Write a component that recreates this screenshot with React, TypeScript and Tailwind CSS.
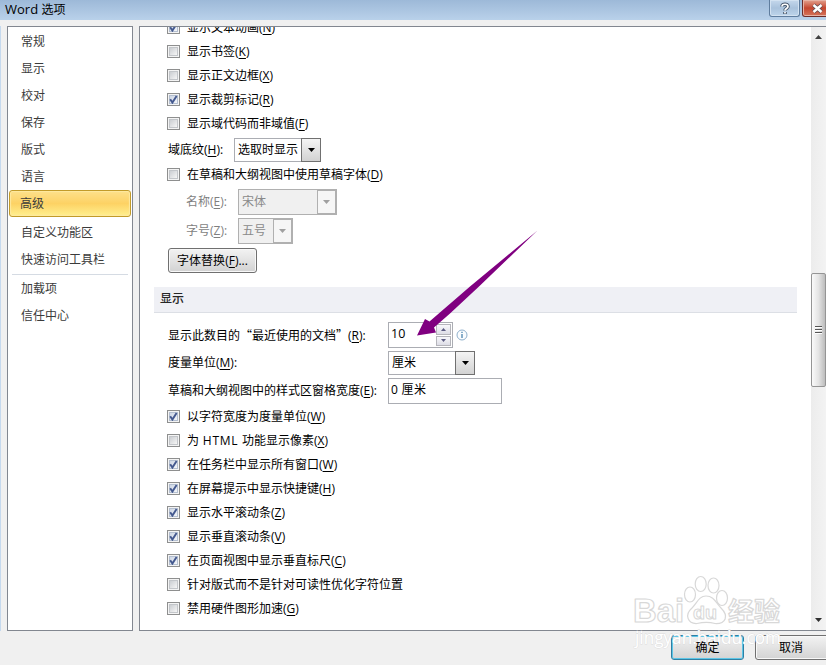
import React from "react";

const NAV_TOP = ["常规", "显示", "校对", "保存", "版式", "语言", "高级"];
const NAV_MIDDLE = ["自定义功能区", "快速访问工具栏"];
const NAV_BOTTOM = ["加载项", "信任中心"];

type Option = { label: React.ReactNode; hotkey?: string; checked?: boolean };

const CONTENT_OPTIONS: Option[] = [
  { label: "显示文本动画", hotkey: "N", checked: true },
  { label: "显示书签", hotkey: "K" },
  { label: "显示正文边框", hotkey: "X" },
  { label: "显示裁剪标记", hotkey: "R", checked: true },
  { label: "显示域代码而非域值", hotkey: "F" },
];

const DISPLAY_OPTIONS: Option[] = [
  { label: "以字符宽度为度量单位", hotkey: "W", checked: true },
  { label: <>为<span className="tracking-[0.7px]"> HTML </span>功能显示像素</>, hotkey: "X" },
  { label: "在任务栏中显示所有窗口", hotkey: "W", checked: true },
  { label: "在屏幕提示中显示快捷键", hotkey: "H", checked: true },
  { label: "显示水平滚动条", hotkey: "Z", checked: true },
  { label: "显示垂直滚动条", hotkey: "V", checked: true },
  { label: "在页面视图中显示垂直标尺", hotkey: "C", checked: true },
  { label: "针对版式而不是针对可读性优化字符位置" },
  { label: "禁用硬件图形加速", hotkey: "G" },
];

function Hotkey({ k, tail = "" }: { k: string; tail?: string }) {
  return (
    <span>
      (<span className="underline decoration-1 underline-offset-2">{k}</span>){tail}
    </span>
  );
}

function CheckRow({ label, hotkey, checked }: Option) {
  return (
    <div className="flex h-6 shrink-0 items-start">
      <div className="mt-[5px] flex size-[13px] items-center justify-center border border-[#8e8f8f] bg-[#f4f4f4]">
        <div
          className={
            checked
              ? "size-[9px] border border-[#b4bfd0] bg-linear-to-br from-[#cdd6e4] to-[#f4f6fa]"
              : "size-[9px] border border-[#c3c6ca] bg-linear-to-br from-[#cbced2] to-[#f6f6f6]"
          }
        >
          {checked && (
            <svg width="9" height="9" viewBox="0 0 9 9" className="-mt-px -ml-px">
              <path d="M1.2 4.2 L3.4 7.6 L7.6 0.9" fill="none" stroke="#44598f" strokeWidth="1.9" />
            </svg>
          )}
        </div>
      </div>
      <span className="ml-[7px] leading-6 whitespace-nowrap">
        {label}
        {hotkey && <Hotkey k={hotkey} />}
      </span>
    </div>
  );
}

function NavItem({ label, active }: { label: string; active?: boolean }) {
  if (active) {
    return (
      <div className="mx-px h-[27px] rounded-[3px] border border-[#c29b29] bg-linear-to-b from-[#fde08a] via-[#fdd264] to-[#fff08e] pl-[10px] leading-[25px] shadow-[inset_0_0_1px_1px_#fee9a0]">
        {label}
      </div>
    );
  }
  return <div className="h-[27px] pl-[13px] leading-[27px]">{label}</div>;
}

function Triangle({ className }: { className: string }) {
  return (
    <svg width="7" height="4" viewBox="0 0 7 4" className={className}>
      <path d="M0 0 H7 L3.5 4 Z" fill="currentColor" />
    </svg>
  );
}

function Combo({ value, className, disabled }: { value: string; className: string; disabled?: boolean }) {
  return (
    <div className={`flex border ${disabled ? "border-[#b0b0b0] bg-[#f0f0f0] text-[#8a8a8a]" : "border-[#abadb3] bg-white"} ${className}`}>
      <span className="flex-1 self-center pl-[3px] leading-5 whitespace-nowrap">{value}</span>
      <div
        className={
          disabled
            ? "flex w-[19px] items-center justify-center border border-[#b0b0b0] bg-[#f6f6f6] text-[#a0a0a0]"
            : "-my-px -mr-px flex w-5 items-center justify-center border border-[#707070] bg-linear-to-b from-[#f4f4f4] to-[#d2d2d2] text-black"
        }
      >
        <Triangle className="" />
      </div>
    </div>
  );
}

function Watermark() {
  return (
    <svg width="160" height="80" viewBox="0 0 160 80" className="absolute top-[570px] left-[628px]">
      <g fill="#fff" fillOpacity="0.8" stroke="#d8d8d8" strokeWidth="1.2" strokeLinejoin="round">
        <text x="5" y="52" fontFamily="Liberation Sans" fontWeight="bold" fontSize="34" textLength="51" lengthAdjust="spacingAndGlyphs">
          Bai
        </text>
        <ellipse cx="62" cy="24.500" rx="5.500" ry="7.500" />
        <ellipse cx="72.700" cy="14" rx="5.500" ry="7.500" />
        <ellipse cx="85.500" cy="15.500" rx="5.500" ry="7.500" />
        <ellipse cx="94" cy="28" rx="5.500" ry="7.500" />
        <path d="M78 26 C71 26 69 33 64 38 C56 45 60 54 69 53.500 C76 52 81 52 87 53.500 C98 54 101 46 93 38 C88 33 86 26 78 26 Z" />
        <text x="65" y="49" fontFamily="Liberation Sans" fontWeight="bold" fontSize="19" strokeWidth="1" textLength="24" lengthAdjust="spacingAndGlyphs">
          du
        </text>
        <text x="100" y="51" fontFamily="Noto Sans CJK SC" fontWeight="bold" fontSize="26" textLength="52">
          经验
        </text>
      </g>
      <text
        x="7"
        y="74"
        fontFamily="Open Sans"
        fontSize="18"
        fill="#fff"
        stroke="#dcdcdc"
        strokeWidth="0.8"
        paintOrder="stroke"
        textLength="146"
        lengthAdjust="spacingAndGlyphs"
      >
        jingyan.baidu.com
      </text>
    </svg>
  );
}

export default function App() {
  return (
    <div
      lang="zh-CN"
      className="relative flex h-[665px] w-[826px] flex-col overflow-hidden bg-[#f0f0f0] font-['Open_Sans','Noto_Sans_CJK_SC',sans-serif] text-[12px] text-black"
    >
      <header className="flex h-5 shrink-0 justify-between bg-linear-to-b from-[#9db9d8] to-[#b9d1ea] pl-[5px]">
        <span className="leading-[18px]">
          <span className="text-[13px]">Word </span>选项
        </span>
        <div className="flex h-[17px] gap-[2px]">
          <div className="flex w-[31px] items-center justify-center rounded-b-[3px] border border-t-0 border-[#5f7d9e] bg-linear-to-b from-[#c5d8ec] via-[#a9c2dc] to-[#bed5eb] shadow-[inset_0_0_0_1px_#d3e2f1]">
            <svg width="12" height="13" viewBox="0 0 12 13" fill="none">
              <path d="M3 4.500 C3 1.500 9 1.500 9 4.500 C9 6.500 6 6.500 6 8.500 M6 10 V12" stroke="#46566b" strokeWidth="3.600" />
              <path d="M3 4.500 C3 1.500 9 1.500 9 4.500 C9 6.500 6 6.500 6 8.500 M6 10 V11.500" stroke="#fff" strokeWidth="1.700" />
            </svg>
          </div>
          <div className="-mr-[7px] flex w-[31px] items-center justify-center rounded-b-[3px] border border-t-0 border-[#6b2c2a] bg-linear-to-b from-[#e2a18f] via-[#c4452f] to-[#d5745a] shadow-[inset_0_0_0_1px_#e7b2a4]">
            <svg width="13" height="11" viewBox="0 0 13 11" fill="none">
              <path d="M2.500 2 L10.500 9 M10.500 2 L2.500 9" stroke="#5b4a50" strokeWidth="4" />
              <path d="M2.500 2 L10.500 9 M10.500 2 L2.500 9" stroke="#fff" strokeWidth="2.500" />
            </svg>
          </div>
        </div>
      </header>

      <div className="mt-[6px] flex h-[605px] shrink-0 gap-[6px] border-l border-[#c5d9ee] pl-[6px]">
        <nav className="w-[126px] shrink-0 border border-[#828790] bg-white pt-px text-[#3b3b3b]">
          {NAV_TOP.map((label) => (
            <NavItem key={label} label={label} active={label === "高级"} />
          ))}
          <div className="h-[2px]" />
          {NAV_MIDDLE.map((label) => (
            <NavItem key={label} label={label} />
          ))}
          <div className="mx-1 mt-px h-px bg-[#d5dbe3]" />
          {NAV_BOTTOM.map((label) => (
            <NavItem key={label} label={label} />
          ))}
        </nav>

        <main className="flex flex-1 overflow-hidden border border-r-0 border-[#828790] bg-white">
          <section className="flex-1 overflow-hidden pl-[27px]">
            <div className="-mt-[11px]">
              {CONTENT_OPTIONS.map((o, i) => (
                <CheckRow key={i} {...o} />
              ))}
            </div>
            <div className="mt-[2px] flex h-6 items-center pl-px">
              <span className="w-[66px]">
                域底纹
                <Hotkey k="H" tail=":" />
              </span>
              <Combo value="选取时显示" className="h-6 w-[87px]" />
            </div>
            <div className="mt-px">
              <CheckRow label="在草稿和大纲视图中使用草稿字体" hotkey="D" />
            </div>
            <div className="mt-[2px] flex items-center pl-[19px] text-[#7f7f7f]">
              <span className="w-[52px]">
                名称
                <Hotkey k="E" tail=":" />
              </span>
              <Combo value="宋体" className="h-[26px] w-[99px]" disabled />
            </div>
            <div className="mt-[3px] flex items-center pl-[19px] text-[#7f7f7f]">
              <span className="w-[52px]">
                字号
                <Hotkey k="Z" tail=":" />
              </span>
              <Combo value="五号" className="h-[26px] w-[55px]" disabled />
            </div>
            <button className="mt-1 ml-px block h-[25px] w-[89px] rounded-[3px] border border-[#707070] bg-linear-to-b from-[#f3f3f3] to-[#d2d2d2] leading-[22px] shadow-[inset_0_0_0_1px_#f8f8f8]">
              字体替换
              <Hotkey k="F" tail="..." />
            </button>

            <h2 className="mt-[14px] mr-[14px] -ml-[13px] h-[26px] border-b border-[#dcdfe5] bg-[#eff0f5] pl-[6px] leading-6 font-medium text-[#262626]">
              显示
            </h2>

            <div className="mt-[9px] flex h-[26px] items-center pl-px">
              <span className="w-[220px] whitespace-nowrap">
                显示此数目的<span className="font-['Noto_Sans_CJK_SC']">“</span>最近使用的文档
                <span className="font-['Noto_Sans_CJK_SC']">”</span>
                <Hotkey k="R" tail=":" />
              </span>
              <div className="flex h-[26px] w-[65px] justify-between border border-[#abadb3] bg-white p-px pl-[2px]">
                <span className="text-[12.5px] leading-[20px]">10</span>
                <div className="flex w-[15px] flex-col gap-px">
                  <div className="flex flex-1 items-center justify-center border border-[#b5b5bb] bg-linear-to-b from-[#f8f8fb] to-[#dddde6]">
                    <svg width="5" height="3" viewBox="0 0 5 3">
                      <path d="M0 3 H5 L2.500 0 Z" fill="#5c5c83" />
                    </svg>
                  </div>
                  <div className="flex flex-1 items-center justify-center border border-[#b5b5bb] bg-linear-to-b from-[#f8f8fb] to-[#dddde6]">
                    <svg width="5" height="3" viewBox="0 0 5 3">
                      <path d="M0 0 H5 L2.500 3 Z" fill="#5c5c83" />
                    </svg>
                  </div>
                </div>
              </div>
              <svg width="12" height="12" viewBox="0 0 12 12" className="ml-[3px]">
                <circle cx="6" cy="6" r="5" fill="#fafdff" stroke="#8fb0cc" />
                <path d="M6 5 V9 M6 2.800 V4" stroke="#3d7ba8" strokeWidth="1.200" />
              </svg>
            </div>
            <div className="mt-[3px] flex h-6 items-center pl-px">
              <span className="w-[220px]">
                度量单位
                <Hotkey k="M" tail=":" />
              </span>
              <Combo value="厘米" className="h-6 w-[87px]" />
            </div>
            <div className="mt-[3px] flex h-[26px] items-center pl-px">
              <span className="w-[220px] whitespace-nowrap">
                草稿和大纲视图中的样式区窗格宽度
                <Hotkey k="E" tail=":" />
              </span>
              <div className="h-[26px] w-[114px] border border-[#abadb3] bg-white pl-[2px] leading-[22px] tracking-[0.3px]">0 厘米</div>
            </div>
            <div className="mt-px">
              {DISPLAY_OPTIONS.map((o, i) => (
                <CheckRow key={i} {...o} />
              ))}
            </div>
          </section>

          {/* scrollbar */}
          <div className="flex w-[15px] shrink-0 flex-col items-center bg-linear-to-r from-[#ececec] to-[#f3f3f3]">
            <Triangle className="mt-2 rotate-180 text-[#404040]" />
            <div className="mt-[234px] flex h-[114px] w-[15px] flex-col items-center justify-center gap-px rounded-[2px] border border-[#959595] bg-linear-to-r from-[#fafafa] via-[#e4e4e4] to-[#bdbdbd]">
              <div className="h-[2px] w-[7px] border-b border-white bg-[#555]" />
              <div className="h-[2px] w-[7px] border-b border-white bg-[#555]" />
              <div className="h-[2px] w-[7px] border-b border-white bg-[#555]" />
            </div>
            <Triangle className="mt-auto mb-2 text-[#303030]" />
          </div>
        </main>
      </div>

      <footer className="-mr-2 mt-1 flex justify-end gap-[11px]">
        <button className="h-[25px] w-[73px] rounded-[3px] border border-[#2f7fa3] bg-linear-to-b from-[#f2f2f2] to-[#d3d3d3] leading-[22px] shadow-[inset_0_0_0_1px_#5cc5e6]">
          <span className="relative z-10">确定</span>
        </button>
        <button className="h-[25px] w-[79px] rounded-[3px] border border-[#707070] bg-linear-to-b from-[#f3f3f3] to-[#d3d3d3] pr-[7px] leading-[22px] shadow-[inset_0_0_0_1px_#f8f8f8]">
          <span className="relative z-10">取消</span>
        </button>
      </footer>

      <svg width="130" height="115" viewBox="0 0 130 115" className="absolute top-[225px] left-[412px]">
        <path d="M125.500 5.500 L58 61.500 L17.500 96.500 L13 94 L5 110.500 L24 107.500 L22 102.500 L38 88.500 L67 61.500 Z" fill="#800080" />
      </svg>
      <Watermark />
    </div>
  );
}
